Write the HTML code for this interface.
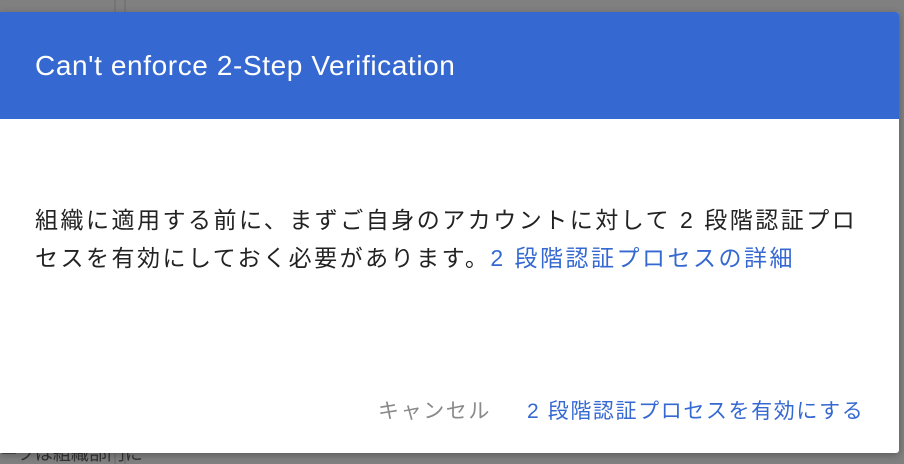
<!DOCTYPE html>
<html><head><meta charset="utf-8"><style>
html,body{margin:0;padding:0;width:904px;height:464px;overflow:hidden;background:#808080;font-family:"Liberation Sans","Noto Sans CJK JP",sans-serif;position:relative}
.l1{position:absolute;left:114px;top:0;width:2px;height:464px;background:#757575}
.l2{position:absolute;left:124px;top:0;width:2px;height:464px;background:#757575}
.bt{position:absolute;left:0;top:440px;font-size:18px;color:#333;}
.dlg{position:absolute;left:0;top:12px;width:899px;height:441px;background:#fff;border-radius:0 3px 3px 0;box-shadow:0 2px 8px rgba(0,0,0,.3)}
.hd{height:107px;background:#3569d1;border-radius:0 3px 0 0;color:#fff;font-size:28px;letter-spacing:0.6px;line-height:107px;padding-left:35px;box-sizing:border-box}
.bd{position:absolute;left:35px;top:189px;font-size:23px;letter-spacing:2.5px;line-height:38px;color:#222;width:860px;white-space:nowrap}
a{color:#3569d1;text-decoration:none}
.btns{position:absolute;top:385px;font-size:21px;letter-spacing:1.6px;line-height:30px;white-space:nowrap}
</style></head><body>
<div class="l1"></div><div class="l2"></div>
<div class="bt">ーフは組織部門に</div>
<div class="dlg">
<div class="hd">Can't enforce 2-Step Verification</div>
<div class="bd">組織に適用する前に、まずご自身のアカウントに対して 2 段階認証プロ<br>セスを有効にしておく必要があります。<a>2 段階認証プロセスの詳細</a></div>
<div class="btns" style="left:378px;color:#8a8a8a">キャンセル</div>
<div class="btns" style="left:527px;color:#3569d1">2 段階認証プロセスを有効にする</div>
</div>
</body></html>
